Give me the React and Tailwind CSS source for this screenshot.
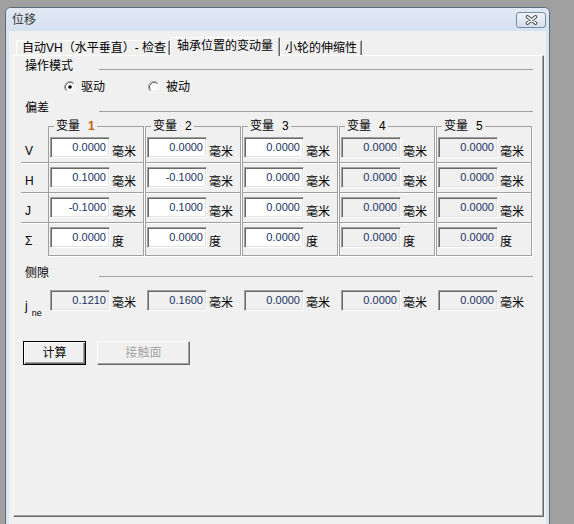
import React from 'react';

const font = "font-['Liberation_Sans','Noto_Sans_CJK_SC',sans-serif]";

const rows = [
  { label: 'V', unit: '毫米', values: ['0.0000', '0.0000', '0.0000', '0.0000', '0.0000'] },
  { label: 'H', unit: '毫米', values: ['0.1000', '-0.1000', '0.0000', '0.0000', '0.0000'] },
  { label: 'J', unit: '毫米', values: ['-0.1000', '0.1000', '0.0000', '0.0000', '0.0000'] },
  { label: 'Σ', unit: '度', values: ['0.0000', '0.0000', '0.0000', '0.0000', '0.0000'] },
];

const backlash = ['0.1210', '0.1600', '0.0000', '0.0000', '0.0000'];

const Field = ({ value, disabled }) => (
  <div
    className={`w-[60px] h-[21px] shrink-0 border border-t-[#a0a0a0] border-l-[#a0a0a0] border-r-white border-b-white shadow-[inset_1px_1px_0_#696969,inset_-1px_-1px_0_#e3e3e3] flex items-center justify-end pr-[3px] text-[11px] text-[#1a3266] ${
      disabled ? 'bg-[#f0f0f0]' : 'bg-white'
    }`}
  >
    {value}
  </div>
);

const SectionHeader = ({ label }) => (
  <div className="flex items-start pl-[11px] h-[14px]">
    <span className="w-[74px] leading-[14px]">{label}</span>
    <div className="flex-1 mr-[10px] mt-[10px] h-[2px] border-t border-[#a0a0a0] border-b-white" />
  </div>
);

const Radio = ({ checked }) => (
  <svg width="12" height="12" viewBox="0 0 12 12" className="shrink-0">
    <circle cx="6" cy="6" r="4.5" fill="#fff" />
    <path d="M2.11 9.89 A5.5 5.5 0 0 1 9.89 2.11" fill="none" stroke="#a0a0a0" />
    <path d="M9.89 2.11 A5.5 5.5 0 0 1 2.11 9.89" fill="none" stroke="#fff" />
    <path d="M2.82 9.18 A4.5 4.5 0 0 1 9.18 2.82" fill="none" stroke="#696969" />
    <path d="M9.18 2.82 A4.5 4.5 0 0 1 2.82 9.18" fill="none" stroke="#e3e3e3" />
    {checked && <circle cx="6" cy="6" r="1.8" fill="#000" />}
  </svg>
);

const CloseButton = () => (
  <div className="w-[30px] h-[16px] rounded-[3px] border border-[#7d8ba1] bg-linear-to-b from-[#eef3f9] to-[#d5dfeb] flex items-center justify-center">
    <svg width="13" height="10" viewBox="0 0 13 10">
      <path d="M2.5 1.8 L10.5 8.2 M10.5 1.8 L2.5 8.2" stroke="#4b4f57" strokeWidth="3.6" strokeLinecap="round" />
      <path d="M2.5 1.8 L10.5 8.2 M10.5 1.8 L2.5 8.2" stroke="#fff" strokeWidth="1.6" strokeLinecap="round" />
    </svg>
  </div>
);

const Tab = ({ children, selected, className }) => (
  <div
    className={`flex items-center border-t border-l border-r border-t-white border-l-white border-r-[#696969] shadow-[inset_-1px_0_0_#a0a0a0] rounded-tl-[2px] whitespace-nowrap leading-[14px] ${
      selected ? 'h-[19px] -mb-[1px] relative z-10 bg-[#f0f0f0] items-start pt-[1px]' : 'h-[15px]'
    } ${className}`}
  >
    {children}
  </div>
);

export default function App() {
  return (
    <div className={`w-[574px] h-[524px] overflow-hidden bg-[#a0a0a0] pt-[7px] pl-[5px] ${font} text-[12px] text-black`}>
      <div className="w-[545px] h-[540px] rounded-t-[6px] border border-[#5e6a7a] bg-[#dbe5f1] flex flex-col">
        <div className="h-[23px] shrink-0 flex items-center justify-between pl-[6px] pr-[3px] rounded-t-[5px] bg-linear-to-b from-[#e0e9f4] to-[#d6e2f0]">
          <span className="text-[#333] leading-[14px]">位移</span>
          <CloseButton />
        </div>

        <div className="flex-1 mx-[3px] bg-[#f0f0f0] pl-[4px] pt-[6px]">
          {/* tabs */}
          <div className="h-[18px] flex items-end pl-[3px]">
            <Tab className="w-[154px] pl-[5px]">自动VH（水平垂直）- 检查</Tab>
            <Tab selected className="w-[110px] pl-[6px]">轴承位置的变动量</Tab>
            <Tab className="w-[82px] pl-[4px]">小轮的伸缩性</Tab>
          </div>

          {/* panel */}
          <div className="w-[531px] h-[462px] border border-t-white border-l-white border-r-[#696969] border-b-[#696969] shadow-[inset_-1px_-1px_0_#a0a0a0]">
            <div className="mt-[3px]">
              <SectionHeader label="操作模式" />
            </div>

            <div className="mt-[7px] h-[14px] flex items-center pl-[50px]">
              <div className="w-[84px] flex items-center gap-[5px]">
                <Radio checked />
                <span className="leading-[14px]">驱动</span>
              </div>
              <div className="flex items-center gap-[6px]">
                <Radio />
                <span className="leading-[14px]">被动</span>
              </div>
            </div>

            <div className="mt-[7px]">
              <SectionHeader label="偏差" />
            </div>

            {/* deviation grid */}
            <div className="mt-[4px] flex pl-[7px]">
              <div className="w-[27px] pt-[14px]">
                {rows.map((r, i) => (
                  <div
                    key={r.label}
                    className={`h-[30px] pl-[4px] pt-[11px] leading-[14px] ${
                      i < 3 ? 'border-b border-[#a0a0a0] shadow-[0_1px_0_#fff]' : ''
                    }`}
                  >
                    {r.label}
                  </div>
                ))}
              </div>
              <div className="flex gap-[1px]">
                {[0, 1, 2, 3, 4].map((c) => (
                  <fieldset
                    key={c}
                    className="w-[96px] border border-[#a0a0a0] pb-[2px] shadow-[1px_1px_0_#fff]"
                  >
                    <legend className="ml-[5px] px-[2px] leading-[14px] bg-[#f0f0f0]">
                      变量
                      <span className={`ml-[8px] ${c === 0 ? 'text-[#c0620a] font-bold' : ''}`}>{c + 1}</span>
                    </legend>
                    {rows.map((r, i) => (
                      <div
                        key={r.label}
                        className={`h-[30px] flex items-start pl-[1px] pt-[4px] ${
                          i < 3 ? 'border-b border-[#a0a0a0] shadow-[0_1px_0_#fff]' : ''
                        }`}
                      >
                        <Field value={r.values[c]} disabled={c >= 3} />
                        <span className="ml-[2px] mt-[8px] leading-[14px] whitespace-nowrap">{r.unit}</span>
                      </div>
                    ))}
                  </fieldset>
                ))}
              </div>
            </div>

            <div className="mt-[10px]">
              <SectionHeader label="侧隙" />
            </div>

            {/* backlash row */}
            <div className="mt-[10px] h-[21px] flex pl-[7px]">
              <div className="w-[27px] flex items-start pl-[4px]">
                <span className="mt-[10px] leading-none">j</span>
                <span className="mt-[19px] ml-[4px] text-[9px] leading-none">ne</span>
              </div>
              <div className="flex gap-[1px]">
                {backlash.map((v, c) => (
                  <div key={c} className="w-[96px] flex items-start pl-[2px]">
                    <Field value={v} disabled />
                    <span className="ml-[2px] mt-[6px] leading-[14px] whitespace-nowrap">毫米</span>
                  </div>
                ))}
              </div>
            </div>

            {/* buttons */}
            <div className="mt-[30px] flex gap-[11px] pl-[9px]">
              <button className="w-[63px] h-[24px] border border-black bg-[#f0f0f0] shadow-[inset_1px_1px_0_#fff,inset_-1px_-1px_0_#696969,inset_-2px_-2px_0_#a0a0a0] flex items-center justify-center leading-[14px]">
                计算
              </button>
              <button
                disabled
                className="w-[93px] h-[24px] border border-t-white border-l-white border-r-[#696969] border-b-[#696969] bg-[#f0f0f0] shadow-[inset_-1px_-1px_0_#a0a0a0] flex items-center justify-center leading-[14px] text-[#a0a0a0] [text-shadow:1px_1px_0_#fff]"
              >
                接触面
              </button>
            </div>
          </div>
        </div>
      </div>
    </div>
  );
}
